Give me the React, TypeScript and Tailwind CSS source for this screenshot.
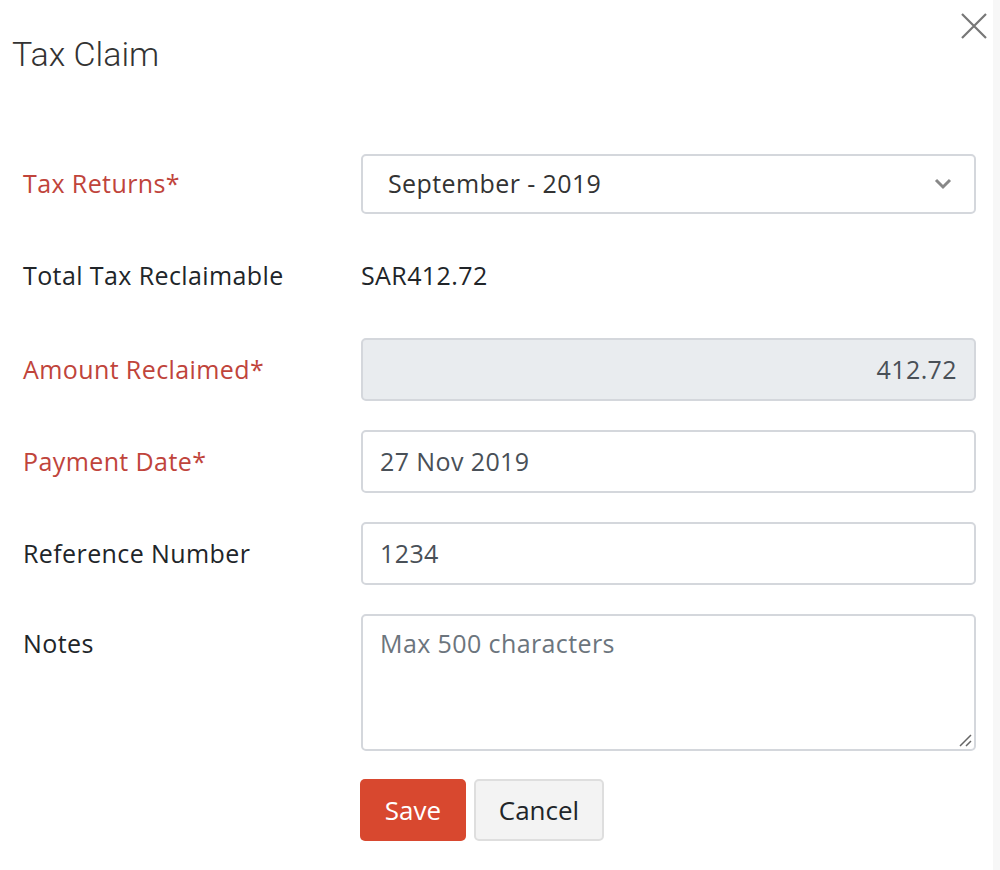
import React from "react";

const font = { fontFamily: "'Open Sans', 'Liberation Sans', sans-serif" };

function Label({ children, req }: { children: React.ReactNode; req?: boolean }) {
  return (
    <div className={`w-[361px] shrink-0 pl-[23px] text-[25px] tracking-[0.4px] ${req ? "text-[#c0443b]" : "text-[#212529]"}`}>
      {children}
    </div>
  );
}

export default function App() {
  return (
    <div className="w-[1000px] h-[870px] bg-white flex" style={font}>
      <div className="flex-1 relative">
        <div className="pt-[30px] pl-[12px] text-[34px] leading-[48px] text-[#333]" style={{ fontFamily: "Roboto, 'Liberation Sans', sans-serif", fontWeight: 300 }}>
          Tax Claim
        </div>
        <button className="absolute right-[6px] top-[13px] w-[26px] h-[26px] text-[#777]">
          <svg viewBox="0 0 26 26" width="26" height="26" stroke="currentColor" strokeWidth="2.2" fill="none">
            <path d="M1 1 L25 25 M25 1 L1 25" />
          </svg>
        </button>

        <div className="mt-[76px] flex flex-col">
          <div className="flex items-center h-[60px]">
            <Label req>Tax Returns*</Label>
            <div className="w-[615px] h-[60px] border-2 border-[#d4d7dc] rounded-[5px] flex items-center pl-[25px] pr-[22px] text-[25px] tracking-[0.4px] text-[#333]">
              <span className="flex-1">September - 2019</span>
              <svg width="18" height="12" viewBox="0 0 18 12" fill="none" stroke="#888" strokeWidth="3">
                <path d="M2 2 L9 9 L16 2" />
              </svg>
            </div>
          </div>

          <div className="flex items-center h-[64px] mt-[30px]">
            <Label>Total Tax Reclaimable</Label>
            <div className="text-[25px] tracking-[0.4px] text-[#212529]">SAR412.72</div>
          </div>

          <div className="flex items-center mt-[30px]">
            <Label req>Amount Reclaimed*</Label>
            <div className="w-[615px] h-[63px] border-2 border-[#d4d7dc] rounded-[5px] bg-[#e9ecef] flex items-center justify-end pr-[17px] text-[25px] tracking-[0.4px] text-[#495057]">
              412.72
            </div>
          </div>

          <div className="flex items-center mt-[29px]">
            <Label req>Payment Date*</Label>
            <div className="w-[615px] h-[63px] border-2 border-[#d4d7dc] rounded-[5px] flex items-center pl-[17px] text-[25px] tracking-[0.4px] text-[#495057]">
              27 Nov 2019
            </div>
          </div>

          <div className="flex items-center mt-[29px]">
            <Label>Reference Number</Label>
            <div className="w-[615px] h-[63px] border-2 border-[#d4d7dc] rounded-[5px] flex items-center pl-[17px] text-[25px] tracking-[0.4px] text-[#495057]">
              1234
            </div>
          </div>

          <div className="flex items-start mt-[29px]">
            <div className="pt-[11px]">
              <Label>Notes</Label>
            </div>
            <div className="relative w-[615px] h-[137px] border-2 border-[#d4d7dc] rounded-[5px] pl-[17px] pt-[9px] text-[25px] tracking-[0.4px] text-[#6c757d]">
              Max 500 characters
              <svg className="absolute right-[2px] bottom-[2px]" width="14" height="14" viewBox="0 0 14 14" stroke="#666" strokeWidth="1.5">
                <path d="M2 13 L13 2 M8 13 L13 8" />
              </svg>
            </div>
          </div>

          <div className="flex gap-[8px] mt-[28px] ml-[360px]">
            <button className="w-[106px] h-[62px] rounded-[5px] bg-[#d8482f] text-white text-[26px]">Save</button>
            <button className="w-[130px] h-[62px] rounded-[5px] bg-[#f3f3f3] border-2 border-[#dedede] text-[#212529] text-[26px]">Cancel</button>
          </div>
        </div>
      </div>
      <div className="w-[7px] bg-[#f7f7f7]" />
    </div>
  );
}
